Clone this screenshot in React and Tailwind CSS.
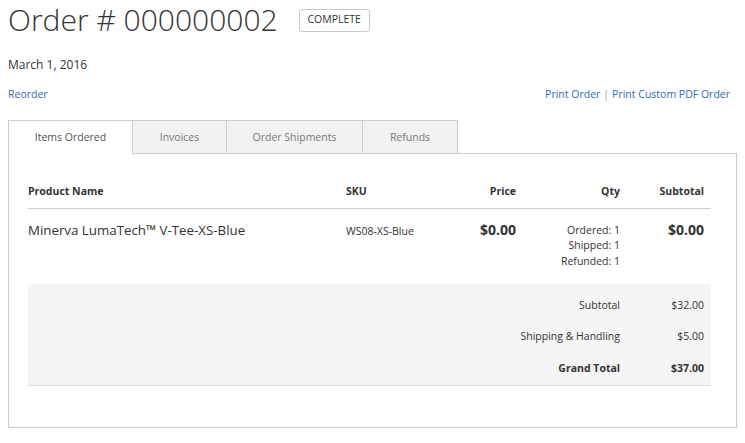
import React from 'react';

const tabs = [
  { label: 'Items Ordered', w: 'w-[125px]', active: true },
  { label: 'Invoices', w: 'w-[94px]' },
  { label: 'Order Shipments', w: 'w-[136px]' },
  { label: 'Refunds', w: 'w-[95px]' },
];

const totals = [
  { label: 'Subtotal', value: '$32.00' },
  { label: 'Shipping & Handling', value: '$5.00' },
  { label: 'Grand Total', value: '$37.00', strong: true },
];

const cols = 'grid grid-cols-[318px_110px_67px_104px_84px]';

export default function App() {
  return (
    <div className="min-h-screen bg-white text-[#333] px-[8px]" style={{ fontFamily: '"Open Sans", "Liberation Sans", sans-serif' }}>
      {/* --- Title --- */}
      <div className="flex items-center pt-[1px]">
        <h1 className="text-[30px] leading-[38px] font-light">Order # 000000002</h1>
        <span className="ml-[21px] h-[23px] w-[71px] flex items-center justify-center border border-[#c8c8c8] rounded-[3px] text-[10.5px] uppercase text-[#333]">
          Complete
        </span>
      </div>

      <div className="mt-[17px] text-[12px] leading-[18px]">March 1, 2016</div>

      <div className="mt-[11px] flex justify-between text-[10.5px] leading-[18px] text-[#2f6cb0] pr-[7px]">
        <a href="#">Reorder</a>
        <div>
          <a href="#">Print Order</a>
          <span className="text-[#999] mx-[3px]">|</span>
          <a href="#">Print Custom PDF Order</a>
        </div>
      </div>

      {/* --- Tabs --- */}
      <div className="mt-[17px] flex items-start">
        {tabs.map((t) => (
          <div
            key={t.label}
            className={
              t.active
                ? `${t.w} h-[34px] -mb-px pt-[1px] relative z-10 bg-white border border-b-0 border-[#ccc] flex items-center justify-center text-[10.5px] text-[#555]`
                : `${t.w} h-[33px] pt-[1px] bg-[#f2f2f2] border-t border-r border-[#ccc] flex items-center justify-center text-[10.5px] text-[#777]`
            }
          >
            {t.label}
          </div>
        ))}
      </div>

      {/* --- Content box --- */}
      <div className="border border-[#ccc] pl-[19px] pr-[25px] pt-[29px] pb-[41px]">
        <div className={`${cols} border-b border-[#ccc] pb-[9px] text-[10.5px] leading-[16px] font-bold`}>
          <div>Product Name</div>
          <div>SKU</div>
          <div className="text-right pr-[7px]">Price</div>
          <div className="text-right pr-[7px]">Qty</div>
          <div className="text-right pr-[7px]">Subtotal</div>
        </div>

        <div className={`${cols} h-[75px] pt-[11px] items-start`}>
          <div className="text-[13.3px] leading-[20px]">Minerva LumaTech™ V-Tee-XS-Blue</div>
          <div className="text-[10.5px] leading-[16px] mt-[3px]">WS08-XS-Blue</div>
          <div className="text-right pr-[7px] text-[14px] leading-[20px] font-bold">$0.00</div>
          <div className="text-right pr-[7px] text-[10.5px] leading-[15.5px] mt-[2.5px]">
            <div>Ordered: 1</div>
            <div>Shipped: 1</div>
            <div>Refunded: 1</div>
          </div>
          <div className="text-right pr-[7px] text-[14px] leading-[20px] font-bold">$0.00</div>
        </div>

        <div className="bg-[#f5f5f5] border-b border-[#ddd] pt-[6px]">
          {totals.map((r) => (
            <div key={r.label} className={`grid grid-cols-[1fr_84px] h-[31.5px] items-center text-[10.5px] ${r.strong ? 'font-bold' : ''}`}>
              <div className="text-right pr-[7px]">{r.label}</div>
              <div className="text-right pr-[7px]">{r.value}</div>
            </div>
          ))}
        </div>
      </div>
    </div>
  );
}
